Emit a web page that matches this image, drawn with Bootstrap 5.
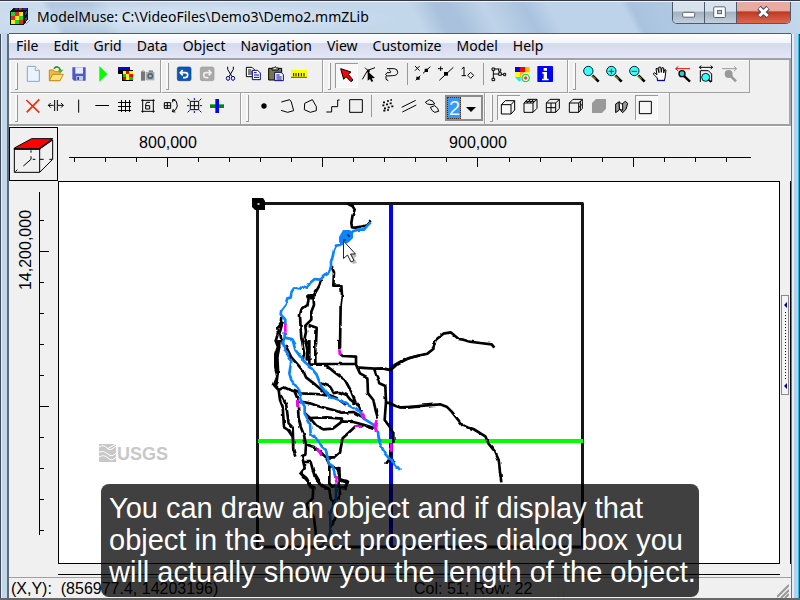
<!DOCTYPE html>
<html lang="en">
<head>
<meta charset="utf-8">
<meta name="viewport" content="width=device-width, initial-scale=1">
<title>ModelMuse</title>
<link href="https://cdn.jsdelivr.net/npm/bootstrap@5.3.0/dist/css/bootstrap.min.css" rel="stylesheet">
<style>
body{font-family:"Liberation Sans",Arial,sans-serif;font-size:16px;line-height:20px;color:#000;background:#666}
.win{border-top:1px solid #33384a;border-bottom:2px solid #666;padding:0 9px;
 background:linear-gradient(90deg,#434b5c 0 1px,#dff0fb 1px 2px,#c3d7ea 2px 7px,#5b6a7c 7px 9px,transparent 9px calc(100% - 9px),#657583 calc(100% - 9px) calc(100% - 8px),#e4eff8 calc(100% - 8px) calc(100% - 6px),#b9d0e8 calc(100% - 6px) calc(100% - 2px),#17c6ee calc(100% - 2px) calc(100% - 1px),#123 calc(100% - 1px)) 0 33px no-repeat,#bdd3e9}
.titlebar{height:32px;margin:0 -9px;padding:0 9px;border-top:1px solid #eef6fc;font-family:"Noto Sans",sans-serif;font-size:14px;
 background:radial-gradient(ellipse 210px 16px at 190px 17px,#e4edf6cc,#e4edf600),linear-gradient(62deg,#c9dbec 0 7%,#b2c9e1 8% 13%,#c3d7eb 15% 52%,#a9c1dc 55% 57%,#bfd4ea 61%,#a9c2dd 66%,#bdd3ea 69% 78%,#a9c3df 79%,#c5d9ec)}
.caption-text{padding-top:5px}
.capbtns{border:1px solid #4c5a6b;border-top:0;border-radius:0 0 5px 5px;overflow:hidden}
.capbtn{width:32px;height:21px;border:0;border-right:1px solid #4c5a6b;padding:0;display:flex;background:linear-gradient(#d8e2ec 0 42%,#a3b1c0 50%,#c2d0dc)}
.capbtn.shut{width:53px;border-right:0;background:linear-gradient(#e7aca1 0 40%,#c03a22 48%,#d9694f)}
.client{background:#f0f0f0;border-top:1px solid #545c66}
.menu{height:25px;font-family:"Noto Sans",sans-serif;font-size:14px;gap:15px;padding-left:7px;border-bottom:1px solid #9fa3ad;background:linear-gradient(#fff 0,#f2f4fb 36%,#d5daec 40%,#e3e6f5)}
.menu a{color:#000;text-decoration:none}
.bars{border-top:1px solid #a0a0a0;border-bottom:2px solid #a0a0a0;padding-left:1px;border-right:2px solid #a8a8a8}
.tg{height:33px;padding:3px 11px 0 0;border-right:1px solid #a0a0a0;border-bottom:1px solid #a0a0a0;border-left:1px solid #fff;box-shadow:inset 0 1px #fff}
.tg.snug{padding-right:0}
.row2 .tg{height:31px;border-bottom:0;padding-top:2px}
.grip{width:3px;height:27px;margin:0 4px;background:#f8f8f8;border-right:1px solid #999;border-bottom:1px solid #999}
.tb{width:23px;height:22px;padding:0;border:0;background:none;display:block}
.tb svg,.capbtn svg{display:block;width:100%;height:100%}
.tb.down{background:#f8f8f8;box-shadow:inset 1px 1px #999,inset -1px -1px #fff;height:25px;padding-bottom:3px}
.vsep{width:1px;height:22px;background:#999;margin:0 3px}
.pick{width:38px;height:26px;margin:0 1px;border:2px solid #8b8b8b;background:#f0f0f0}
.pick select{appearance:none;border:0;padding:0 0 0 2px;width:34px;height:22px;font-size:20px;line-height:22px;color:#e8f3ff;background:linear-gradient(90deg,#3399ff 14px,#f0f0f0 14px);outline:0;display:block;border-radius:0}
.pick::before{content:"";position:absolute;left:0;top:0;width:14px;height:22px;border:1px dotted #432}
.pick::after{content:"";position:absolute;right:5px;top:10px;border:5px solid transparent;border-top-color:#000;border-bottom:0;pointer-events:none}
.k{fill:none;stroke:#000;stroke-width:3}
.work{border-top:1px solid #fff;display:grid;grid-template:54px minmax(0,1fr) 13px/49px minmax(0,1fr) 11px}
.viewbtn{border:1px solid #000;padding:0;background:#f0f0f0}
.xruler{grid-column:2/4}
.board{border:1px solid #000;background:#fff}
.board svg{left:0;top:0;width:720px;height:100%}
.rt{font-size:16px}
.logo{font:700 18px "Liberation Sans",sans-serif}
.rside{padding-bottom:55px;border-right:1px solid #000}
.vsplit{width:8px;height:100px;border:1px solid #888;background:#f4f4f4}
.foot{grid-column:1/4;padding-top:1px}
.hsplit{width:100px;height:9px;border:1px solid #999}
.footline{height:1px;background:#000;margin:0 11px 0 49px}
.status{height:21px;border-top:1px solid #a0a0a0}
.pane{padding:1px 2px 0}
.pane.mid{flex:0 0 148px}
.pane.end{flex:0 0 228px}
.caption{left:101px;right:101px;bottom:1px;border-radius:8px;background:rgba(0,0,0,.75);color:#fff;font-size:29px;line-height:32px;padding:8px 8px 9px;white-space:nowrap}
</style>
<script src="https://cdn.jsdelivr.net/npm/bootstrap@5.3.0/dist/js/bootstrap.bundle.min.js"></script>
</head>
<body>
<div class="win d-flex flex-column vh-100 position-relative overflow-hidden">
<header class="titlebar d-flex flex-shrink-0 align-items-start">
 <svg class="mt-1" width="24" height="24" viewBox="27 18 72 72" shape-rendering="crispEdges"><path d="M30 36L42 23H84V57L72 75H30Z" fill="#111"/><path d="M45 25h10v6h-10zM70 25h10v6h-10z" fill="#22c"/><path d="M57 25h10v6h-10z" fill="#c22"/><path d="M32 37h12v11H32zM57 49h12v11H57zM45 61h11v12H45z" fill="#1d2"/><path d="M45 37h11v11H45zM32 49h12v11H32zM57 61h12v12H57z" fill="#e22"/><path d="M57 37h12v11H57zM45 49h11v11H45zM32 61h12v12H32z" fill="#ee2"/><path d="M74 38l7-8v10l-7 9zM74 56l7-8v10l-7 9z" fill="#248"/><path d="M78 72l12-12" stroke="#999" stroke-width="4"/></svg>
 <span class="caption-text ms-1 flex-grow-1">ModelMuse: C:\VideoFiles\Demo3\Demo2.mmZLib</span>
 <div class="capbtns d-flex">
  <button class="capbtn" aria-label="Minimize"><svg viewBox="820 3 96 63"><rect x="850" y="34" width="37" height="15" rx="3" fill="#fff" stroke="#555e70" stroke-width="3"/></svg></button>
  <button class="capbtn" aria-label="Maximize"><svg viewBox="917 3 96 63"><rect x="944" y="17" width="36" height="33" rx="3" fill="#fff" stroke="#555e70" stroke-width="3"/><rect x="956" y="28" width="12" height="10" fill="#b8c8d8" stroke="#555e70" stroke-width="3"/></svg></button>
  <button class="capbtn shut" aria-label="Close"><svg viewBox="1014 3 159 63"><path d="M1080 20L1107 46M1107 20L1080 46" stroke="#4a4555" stroke-width="15"/><path d="M1081 21L1106 45M1106 21L1081 45" stroke="#fff" stroke-width="9"/></svg></button>
 </div>
</header>
<main class="client d-flex flex-column flex-grow-1">
<nav class="menu d-flex align-items-center flex-shrink-0"><a href="#">File</a><a href="#">Edit</a><a href="#">Grid</a><a href="#">Data</a><a href="#">Object</a><a href="#">Navigation</a><a href="#">View</a><a href="#">Customize</a><a href="#">Model</a><a href="#">Help</a></nav>
<div class="bars flex-shrink-0">
<div class="d-flex">
 <div class="tg snug d-flex align-items-start"><i class="grip"></i>
  <button class="tb" aria-label="New"><svg viewBox="66 9 69 66"><path d="M82 19H106L118 31V64H82Z" fill="#eaf3ff" stroke="#8ba5c9" stroke-width="3"/><path d="M106 19V31H118" fill="#fff" stroke="#8ba5c9" stroke-width="3"/></svg></button>
  <button class="tb" aria-label="Open"><svg viewBox="135 9 69 66"><path d="M148 62V30H160L165 35H180V62Z" fill="#f2b93b" stroke="#c78b1d" stroke-width="3"/><path d="M148 62L158 43H190L180 62Z" fill="#ffe27a" stroke="#c78b1d" stroke-width="3"/><path d="M162 26C168 18 178 19 181 30" fill="none" stroke="#2f8a23" stroke-width="5"/><path d="M173 29H190L182 39Z" fill="#4fae31"/></svg></button>
  <button class="tb" aria-label="Save"><svg viewBox="204 9 69 66"><path d="M217 22H257V62H222L217 57Z" fill="#5058c4"/><path d="M226 22h23v19h-23z" fill="#e8ecfa"/><path d="M229 48h20v14h-20z" fill="#c4cae4"/><path d="M232 51h5v9h-5z" fill="#37408f"/></svg></button>
  <button class="tb" aria-label="Run"><svg viewBox="273 9 69 66"><path d="M298 18L322 42L298 66Z" fill="#0f0"/></svg></button>
  <button class="tb" aria-label="Colors" ><svg viewBox="342 9 69 66" shape-rendering="crispEdges"><path d="M354 21h36v22h-36z" fill="#000"/><path d="M354 21h36v9h-36z" fill="#00d"/><path d="M366 31h33v32h-33z"/><path d="M369 33h10v10h-10zM388 33h10v10h-10zM378 51h10v10h-10z" fill="#ff0"/><path d="M378 33h10v10h-10zM369 51h9v10h-9zM388 42h10v10h-10z" fill="#e00"/><path d="M369 42h10v10h-10zM388 51h10v10h-10z" fill="#0c0"/><path d="M378 42h10v10h-10z" fill="#ff0"/></svg></button>
  <button class="tb" aria-label="Export image"><svg viewBox="411 9 69 66"><path d="M423 34h12v28h-12z" fill="#777"/><path d="M426 31h6v4h-6z" fill="#aaa"/><path d="M437 36h26v25h-26z" fill="#a8adb2"/><path d="M446 31h13v6h-13z" fill="#888"/><circle cx="451" cy="48" r="9" fill="#53626f"/><circle cx="451" cy="48" r="4" fill="#9fc6e0"/></svg></button>
 </div>
 <div class="tg d-flex align-items-start"><i class="grip"></i>
  <button class="tb" aria-label="Undo"><svg viewBox="519 9 69 66"><rect x="532" y="21" width="41" height="41" rx="5" fill="#0c58b4" stroke="#093f88" stroke-width="2"/><path d="M548 30L541 38L548 46M542 38H556Q563 38 563 45T556 53H549" fill="none" stroke="#fff" stroke-width="5"/></svg></button>
  <button class="tb" aria-label="Redo"><svg viewBox="588 9 69 66"><rect x="601" y="21" width="41" height="41" rx="5" fill="#aaa" stroke="#999" stroke-width="2"/><path d="M626 30L633 38L626 46M632 38H618Q611 38 611 45T618 53H625" fill="none" stroke="#eee" stroke-width="5"/></svg></button>
  <button class="tb" aria-label="Cut"><svg viewBox="657 9 69 66"><path d="M683 20V28L696 50M700 20V28L687 50" class="k"/><ellipse cx="684" cy="55" rx="5" ry="6" fill="none" stroke="#009" stroke-width="3"/><ellipse cx="699" cy="55" rx="5" ry="6" fill="none" stroke="#009" stroke-width="3"/></svg></button>
  <button class="tb" aria-label="Copy"><svg viewBox="726 9 69 66"><path d="M739 22H756L763 29V50H739Z" fill="#fff" stroke="#000" stroke-width="3"/><path d="M744 30h10m-10 6h14m-14 6h14" class="k"/><path d="M757 31H773L781 39V59H757Z" fill="#fff" stroke="#00008b" stroke-width="3"/><path d="M762 38h8m-8 7h15m-15 7h15" fill="none" stroke="#00008b" stroke-width="3"/></svg></button>
  <button class="tb" aria-label="Paste"><svg viewBox="0 9 69 66"><path d="M11 25H50V60H11Z" fill="#77773f" stroke="#000" stroke-width="3"/><path d="M21 30V24H26L30 20L35 24H40V30Z" fill="#ddd" stroke="#000" stroke-width="3"/><path d="M29 37H48L55 44V62H29Z" fill="#fff" stroke="#00008b" stroke-width="3"/><path d="M34 45h10m-10 6h16m-16 6h16" stroke="#00008b" stroke-width="3"/></svg></button>
  <button class="tb" aria-label="Measure"><svg viewBox="69 9 69 66"><path d="M78 30h48v22h-48z" fill="#ff0"/><path d="M78 52h48" stroke="#000" stroke-width="2"/><path d="M86 39v10m7-10v10m8-10v10m8-10v10m8-10v10" stroke="#000" stroke-width="3"/></svg></button>
 </div>
 <div class="tg d-flex align-items-start"><i class="grip"></i>
  <button class="tb down" aria-label="Select"><svg viewBox="210 9 69 66"><path d="M227 26L258 36L250 43L264 60L258 65L243 50L236 58Z" fill="#f00" stroke="#000" stroke-width="3"/></svg></button>
  <button class="tb" aria-label="Edit vertex"><svg viewBox="279 9 69 66"><path d="M292 58L308 31L330 23M300 23L310 33" class="k"/><path d="M306 29h8v8h-8zM308 34L330 54L320 55L325 64L319 65L315 57L308 62Z"/></svg></button>
  <button class="tb" aria-label="Lasso"><svg viewBox="348 9 69 66"><path d="M366 26H388Q398 27 398 37T382 47L366 48Q358 44 366 38H376Q380 34 372 29M363 48V58L370 62" class="k"/></svg></button>
  <i class="vsep"></i>
  <button class="tb" aria-label="Delete segment"><svg viewBox="438 9 69 66"><path d="M450 18L464 32M464 18L450 32M452 61L466 47M474 40L496 20" class="k"/><path d="M454 50h10v9h-10zM479 26h10v10h-10z"/></svg></button>
  <button class="tb" aria-label="Insert point"><svg viewBox="507 9 69 66"><path d="M519 26H534M527 19V33M523 61L565 22" class="k"/><path d="M537 36h12v11h-12z"/></svg></button>
  <button class="tb" aria-label="Vertex value"><svg viewBox="576 9 69 66"><path d="M590 27L597 21V47M590 47H603M617 37L626 46L617 55L608 46Z" class="k"/></svg></button>
  <i class="vsep"></i>
  <button class="tb" aria-label="Show objects"><svg viewBox="669 9 69 66"><path d="M684 24h8v7h-8zM692 27h14M688 31v24M688 42h16M704 26v8h6v-8M704 38v8h8v-8h-8M684 55h8v7h-8zM712 43h7M719 40h6v7h-6z" class="k"/></svg></button>
  <button class="tb" aria-label="Data visualization"><svg viewBox="738 9 69 66"><path d="M753 21h15v15h-15z" fill="#00e"/><path d="M768 21h15v15h-15z" fill="#e00"/><path d="M783 21h14v15h-14z" fill="#fb0"/><path d="M753 36h15v15h-15z" fill="#ff0"/><path d="M768 36h14v15h-14z" fill="#fa3"/><path d="M753 51h18v10l-6 4z" fill="#3df"/><path d="M782 36h15v10h-15z" fill="#fe4"/><circle cx="785" cy="54" r="15" fill="#fff"/><circle cx="785" cy="54" r="11" fill="none" stroke="#0d3" stroke-width="4"/><circle cx="785" cy="54" r="5" fill="#f33"/></svg></button>
  <button class="tb" aria-label="Information"><svg viewBox="12 9 69 66"><rect x="25" y="18" width="47" height="48" rx="2" fill="#00f"/><path d="M44 24h10v8h-10zM40 36h14v20h5v5H39v-5h5V41h-4z" fill="#fff"/></svg></button>
 </div>
 <div class="tg pe-2 d-flex align-items-start"><i class="grip"></i>
  <button class="tb" aria-label="Zoom"><svg viewBox="147 9 69 66"><path d="M184 46L203 65" stroke="#000" stroke-width="8"/><path d="M184 48L194 57" stroke="#dd0" stroke-width="3"/><circle cx="172" cy="33" r="14" fill="#3ff" stroke="#023" stroke-width="3"/></svg></button>
  <button class="tb" aria-label="Zoom in"><svg viewBox="216 9 69 66"><path d="M253 46L272 65" stroke="#000" stroke-width="8"/><path d="M253 48L263 57" stroke="#dd0" stroke-width="3"/><circle cx="241" cy="33" r="14" fill="#3ff" stroke="#023" stroke-width="3"/><path d="M233 34h16m-8-8v16" stroke="#e00" stroke-width="3"/></svg></button>
  <button class="tb" aria-label="Zoom out"><svg viewBox="285 9 69 66"><path d="M322 46L341 65" stroke="#000" stroke-width="8"/><path d="M322 48L332 57" stroke="#dd0" stroke-width="3"/><circle cx="310" cy="33" r="14" fill="#3ff" stroke="#023" stroke-width="3"/><path d="M302 34h16" stroke="#e00" stroke-width="3"/></svg></button>
  <button class="tb" aria-label="Pan"><svg viewBox="354 9 69 66"><path d="M379 61V54L367 42L370 38L378 44L375 26L380 25L384 38L383 22L389 21L391 37L393 23L398 24V39L401 29L405 30L402 54L400 61Z" fill="#fff" stroke="#000" stroke-width="3"/><path d="M378 62h24" stroke="#00b" stroke-width="3"/></svg></button>
  <button class="tb" aria-label="Previous view"><svg viewBox="423 9 69 66"><path d="M434 26H477M442 19L434 26L442 33" fill="none" stroke="#f00" stroke-width="3"/><path d="M458 47L477 65" stroke="#000" stroke-width="7"/><circle cx="453" cy="41" r="9" fill="#3cc" stroke="#000" stroke-width="4"/></svg></button>
  <button class="tb" aria-label="Zoom extents"><svg viewBox="492 9 69 66"><path d="M505 22H545M511 17L505 22L511 27M539 17L545 22L539 27M508 32V66M508 32H532L542 42V66" class="k"/><circle cx="524" cy="52" r="12" fill="#3ff" stroke="#023" stroke-width="3"/><path d="M532 59L540 66" stroke="#000" stroke-width="5"/></svg></button>
  <button class="tb" aria-label="Next view"><svg viewBox="561 9 69 66"><path d="M573 26H616M609 19L617 26L609 33" fill="none" stroke="#999" stroke-width="3"/><path d="M598 47L615 64" stroke="#999" stroke-width="8"/><circle cx="593" cy="42" r="12" fill="#999"/></svg></button>
 </div>
</div>
<div class="row2 d-flex">
 <div class="tg d-flex align-items-start"><i class="grip"></i>
  <button class="tb" aria-label="Delete"><svg viewBox="66 105 69 66"><path d="M79 120L118 158M118 118L80 157" stroke="#e83010" stroke-width="5"/></svg></button>
  <button class="tb" aria-label="Move column"><svg viewBox="135 105 69 66"><path d="M145 136H161M152 129L145 136L152 143M190 136H174M183 129L190 136L183 143M164 120V153M172 120V153" class="k"/></svg></button>
  <button class="tb" aria-label="Add column"><svg viewBox="204 105 69 66"><path d="M236 119V158" class="k"/></svg></button>
  <button class="tb" aria-label="Add row"><svg viewBox="273 105 69 66"><path d="M286 136.500H327" class="k"/></svg></button>
  <button class="tb" aria-label="Grid"><svg viewBox="342 105 69 66" shape-rendering="crispEdges"><path d="M355 127H394M355 139H394M355 151H394M364 119V157M376 119V157M388 119V157" class="k"/></svg></button>
  <button class="tb" aria-label="Cell spacing"><svg viewBox="411 105 69 66"><path d="M424 121H464M424 154H464M428 118V158M460 118V158M450 127H440L437 134V147H449V137H438" class="k"/></svg></button>
  <button class="tb" aria-label="Rotate grid"><svg viewBox="480 105 69 66"><path d="M493 128H512V145H493ZM502 128V145M493 137H512M518 119L529 124L532 138L527 149L517 155M518 119V127M518 119H526M517 155L520 147M517 155L526 156" class="k"/></svg></button>
  <button class="tb" aria-label="Generate grid"><svg viewBox="549 105 69 66"><path d="M571 124H596V149H571ZM583 124V149M571 137H596" class="k"/><path d="M583 114V120M583 153V159M561 137H567M600 137H606M563 116L569 122M604 116L598 122M563 157L569 151M604 157L598 151" stroke="#00d" stroke-width="3"/></svg></button>
  <button class="tb" aria-label="Align"><svg viewBox="618 105 69 66"><path d="M630 133h42v11h-42z" fill="#080"/><path d="M646 117h11v42h-11z" fill="#00f"/></svg></button>
 </div>
 <div class="tg snug d-flex align-items-start"><i class="grip"></i>
  <button class="tb" aria-label="Point object"><svg viewBox="759 105 69 66"><circle cx="792" cy="138" r="8"/></svg></button>
  <button class="tb" aria-label="Line object"><svg viewBox="33 105 69 66"><path d="M49 126L74 119L79 126L86 152L68 157L48 151" class="k"/></svg></button>
  <button class="tb" aria-label="Polygon object"><svg viewBox="102 105 69 66"><path d="M119 130L142 119L154 140V152L136 157L118 149Z" class="k"/></svg></button>
  <button class="tb" aria-label="Straight line object"><svg viewBox="171 105 69 66"><path d="M184 156H200V140H218V120H224" class="k"/></svg></button>
  <button class="tb" aria-label="Rectangle object"><svg viewBox="240 105 69 66"><path d="M254 119H292V157H254Z" class="k"/></svg></button>
  <i class="vsep"></i>
  <button class="tb" aria-label="Points"><svg viewBox="333 105 69 66"><path d="M357 127h6m6-4h6m4-3h5M355 136h6m5-3h6m5-3h6M360 145h6m5-3h6m5-3h6M358 152h6m5-2h6" stroke="#000" stroke-width="5"/></svg></button>
  <button class="tb" aria-label="Lines"><svg viewBox="402 105 69 66"><path d="M413 142L455 121M415 156L457 135" class="k"/></svg></button>
  <button class="tb" aria-label="Polygons"><svg viewBox="471 105 69 66"><path d="M484 127L496 119L507 124L512 132L501 134L490 132ZM499 142L512 137L521 145L524 154L512 157L505 152Z" class="k"/></svg></button>
  <div class="pick position-relative"><select aria-label="Dimensions"><option>2</option></select></div>
 </div>
 <div class="tg d-flex align-items-start"><i class="grip"></i>
  <button class="tb down" aria-label="Top view"><svg viewBox="699 105 69 66"><path d="M712 134H741V162H712ZM712 134L724 122H752L741 134M752 122V150L741 162" class="k"/></svg></button>
  <button class="tb" aria-label="Columns"><svg viewBox="768 105 69 66"><path d="M780 129H807V157H780ZM780 129L791 118H819L807 129M819 118V145L807 157M789 129L800 118M798 129L809 118M784 124H813" class="k"/></svg></button>
  <button class="tb" aria-label="Front cells"><svg viewBox="42 105 69 66"><path d="M52 129H80V157H52ZM52 129L63 118H91L80 129M91 118V145L80 157M66 129V157M52 143H80" class="k"/></svg></button>
  <button class="tb" aria-label="Side cells"><svg viewBox="111 105 69 66"><path d="M121 129H149V157H121ZM121 129L132 118H160L149 129M160 118V145L149 157M154 123V152M149 143L160 132" class="k"/></svg></button>
  <button class="tb" aria-label="Shaded"><svg viewBox="180 105 69 66"><path d="M189 129L201 117H231V146L219 159H189Z" fill="#999"/></svg></button>
  <button class="tb" aria-label="3D objects"><svg viewBox="249 105 69 66"><path d="M260 132L271 125V150L260 158ZM279 132L289 124L296 130L291 148L281 158L275 152Z" fill="#999" stroke="#000" stroke-width="3"/><path d="M270 126L281 134V151L272 148Z" fill="#fff" stroke="#000" stroke-width="3"/></svg></button>
  <button class="tb down" aria-label="2D"><svg viewBox="318 105 69 66"><path d="M331 124H367V161H331Z" class="k"/></svg></button>
 </div>
</div>
</div>
<section class="work flex-grow-1">
 <button class="viewbtn" aria-label="3D view"><svg class="d-block" width="47" height="52" viewBox="30 9 141 156"><path d="M43 70V142H119V70M119 142L158 103V45L119 72" fill="none" stroke="#000" stroke-width="3"/><path d="M43 69L95 41H158L120 69V73H43Z" fill="#f00" stroke="#000" stroke-width="3"/><path d="M44 71H119L157 44" class="k"/><path d="M46 140L52 134M70 123L93 103V94M93 83V76M98 103H106M120 103H131M148 103H156" fill="none" stroke="#000" stroke-width="3"/></svg></button>
 <div class="xruler">
 <svg class="d-block w-100 h-100" viewBox="58 127 733 54" preserveAspectRatio="xMinYMin" shape-rendering="crispEdges"><path d="M69 157.500H751" stroke="#000"/><path d="M74.500 157v5m31-5v5m31-5v5m31-5v10m31-10v5m31-5v5m31-5v5m31-5v5m31-5v10m31-10v5m31-5v5m31-5v5m31-5v5m31-5v10m32-10v5m31-5v5m31-5v5m31-5v5m31-5v10m31-10v5m31-5v5m31-5v5" stroke="#000"/><g class="rt" text-anchor="middle"><text x="168" y="148">800,000</text><text x="478" y="148">900,000</text></g></svg></div>
 <svg class="d-block w-100 h-100" viewBox="9 181 49 383" preserveAspectRatio="xMinYMin"><path d="M39.500 192V535M39 220.500h5m-5 31h10m-10 31h5m-5 31h5m-5 31h5m-5 31h5m-5 31h10m-10 31h5m-5 31h5m-5 31h5m-5 31h5" stroke="#000" fill="none" shape-rendering="crispEdges"/><text class="rt" text-anchor="middle" transform="translate(31 250) rotate(-90)">14,200,000</text></svg>
 <div class="board position-relative overflow-hidden">
 <svg class="position-absolute" viewBox="59 182 720 381" preserveAspectRatio="xMinYMin" fill="none" stroke-linejoin="round">
  <defs><filter id="rough" filterUnits="userSpaceOnUse" x="250" y="195" width="340" height="360" color-interpolation-filters="sRGB"><feTurbulence type="fractalNoise" baseFrequency=".16" numOctaves="1" seed="4"/><feDisplacementMap in="SourceGraphic" scale="3" xChannelSelector="R" yChannelSelector="G"/></filter></defs>
  <g fill="#c8c8c8"><path d="M99 444h17v18h-17z"/><path d="M99 447q5-3 8 1t9-2M99 452q5-2 9 2t8-1M99 457q5-3 9 1t8-1M107 449l9-5" stroke="#fff" stroke-width="1" fill="none"/><text class="logo" x="117" y="460">USGS</text></g>
  <path d="M257.500 203.500H582.500V547H257.500Z" stroke="#151515" stroke-width="3"/>
  <path d="M391 205V546" stroke="#00f" stroke-width="4"/>
  <path d="M258 441H583" stroke="#0f0" stroke-width="4"/>
  <path d="M252 198h11l2 3v9h-10l-3-3z" fill="#000"/><path d="M257.500 203h2v2h-2z" fill="#ccc"/>
  <g filter="url(#rough)">
  <g stroke="#000" stroke-width="8">
   <path transform="translate(250 195) scale(.33333)" d="M292 26L308 34L314 44L308 60L304 84L306 97L316 98L335 95L350 90L362 76M244 214L252 232L250 272H274L276 300L272 330L270 460M214 254L208 272L198 290L190 302L172 304L176 314L172 330L154 344L150 360L152 400L154 430L160 448M172 302L198 300M174 310L194 308M190 302L192 330L184 350L184 374L166 392L168 410L164 430L174 448M176 390L200 398L198 448M94 366L92 385L82 398L84 415L78 435L86 448M98 380L90 410L96 448"/>
   <path transform="translate(250 340) scale(.33333)" d="M76 0L84 20L76 45L76 80L82 110L72 135L86 150L102 142L120 150L140 156L150 160L200 162L232 166M86 0L88 20L82 50L84 90L80 125L74 137M86 150L90 180L98 200L100 230L102 262L114 270L128 290L130 330L136 350M94 165L108 190L112 220L116 250L128 262L130 320M106 15L124 52L144 75L160 94L168 112L196 134L230 162L260 174L290 196M150 185L180 190L210 200L250 210L275 218L310 216L340 232M166 220L180 234L230 232L276 236L272 248L248 266L220 268L198 256L180 234M274 244L310 246L346 256L372 264M132 150L142 175L146 235L152 260L162 285L168 314L190 320L206 332M168 316L166 344L156 348L160 366L182 366L188 388L196 416L215 438L240 448M160 366L164 385L152 400L170 415L188 448M210 334L228 352H252L270 335L278 295L315 260L340 258M228 352L240 378L260 384L268 405L270 420L292 428L285 448M238 378V430L246 440L265 436M156 0L162 40L158 62M166 0L172 30L170 62M178 0V72M196 0V72H318V50L278 48L270 42M268 0V28M172 74H225L258 100L285 120L304 155L316 186L336 215M318 74L330 100L352 112L354 160L370 180L378 215L384 236M318 82L372 86L400 85L422 90L440 74L475 55L510 46M372 86L388 130L406 138L408 185L404 240L420 262L430 280V310M424 335L418 355L436 370M418 358L408 372M408 188L428 190L450 202L510 200M210 128L240 140L252 160L266 156L290 165L300 178L316 190"/>
   <path transform="translate(380 195) scale(.33333)" d="M28 524L44 510L65 498L80 492L100 486L142 476L160 462L166 436L190 416L212 412L236 432L250 434L270 440L300 444L335 448L343 458M28 626L56 636L80 638L130 632L180 628L200 635L215 650L248 692L280 702L316 724L325 745L345 770L356 795L360 830L364 862"/>
   <path transform="translate(0 430) scale(.33333)" d="M900 128L940 172L938 205L918 225L942 262L948 315M945 132L965 165L988 178L992 205L1006 235L1010 255L992 295L994 315M1010 170L1035 172L1044 155L1020 148M1018 110L1020 200L1000 215"/>
  </g>
  <g stroke="#0b84ff" stroke-width="8">
   <path transform="translate(250 195) scale(.33333)" d="M362 82L352 92L342 104L328 104L310 108L290 128L270 150L258 152L252 165L248 185L243 200V215L236 232L222 240L208 254L194 252L180 264L172 278L158 274L148 283L132 280L124 292L122 308L112 310L106 330L94 346L92 358L106 374V390M104 410V428L126 432L136 448M104 428L96 448"/>
   <path transform="translate(250 340) scale(.33333)" d="M98 0L104 30L124 62L118 100L124 120L148 152L152 180L164 200V220L180 250L182 282L206 304L216 320L228 330L236 370L248 378L258 420M128 0L136 30L160 62L180 80L200 104L214 140L240 172L270 180L296 196L330 215L340 235L370 254L384 280L390 310L404 340L420 358L436 372L450 390"/>
   <path transform="translate(0 430) scale(.33333)" d="M1008 160V210L990 250L992 300L985 325L965 345"/>
  </g>
  <path transform="translate(250 340) scale(.33333)" stroke="#f0f" stroke-width="8" d="M106 -48V-25M268 28L270 42M142 180L144 206M202 326L214 345M256 408L260 428M336 218L344 238M314 260H336M380 240L376 254L378 276M424 310V335"/>
  </g>
  <path d="M343 230h7l3 3v5l-4 4-5 3h-3l-2-3v-5z" fill="#0b84ff"/>
  <path d="M347 235h2v2M343 240h3" stroke="#000"/>
  <path d="M346 245L357 256L354 258L357 263L353 264L350 260Z" fill="#bbb"/>
  <path d="M343.500 241V258.500L347.500 255L351 262L354 260.500L350.500 254H355.500Z" fill="#fff" stroke="#222"/>
 </svg></div>
 <div class="rside d-flex align-items-center justify-content-center">
  <div class="vsplit"><svg class="d-block" width="6" height="98"><path d="M5 6v6L2 9zM5 87v6L2 90z" fill="#00008b"/><path d="M3.500 16V83" stroke="#00008b" stroke-dasharray="1 2"/></svg></div></div>
 <div class="foot"><div class="hsplit mx-auto"></div><div class="footline"></div></div>
</section>
<footer class="status d-flex flex-shrink-0">
 <div class="pane flex-grow-1">(X,Y):&nbsp; (856977.4, 14203196)</div>
 <div class="pane mid border-start border-end">Col: 51; Row: 22</div>
 <div class="pane end border-start ms-1 d-flex justify-content-end align-items-end"><svg width="12" height="14"><path d="M0 13L12 1M4 14L12 6M8 14L12 10" stroke="#999" stroke-width="2"/></svg></div>
</footer>
</main>
<div class="caption position-absolute">You can draw an object and if display that<br>object in the object properties dialog box you<br>will actually show you the length of the object.</div>
</div>
</body>
</html>
